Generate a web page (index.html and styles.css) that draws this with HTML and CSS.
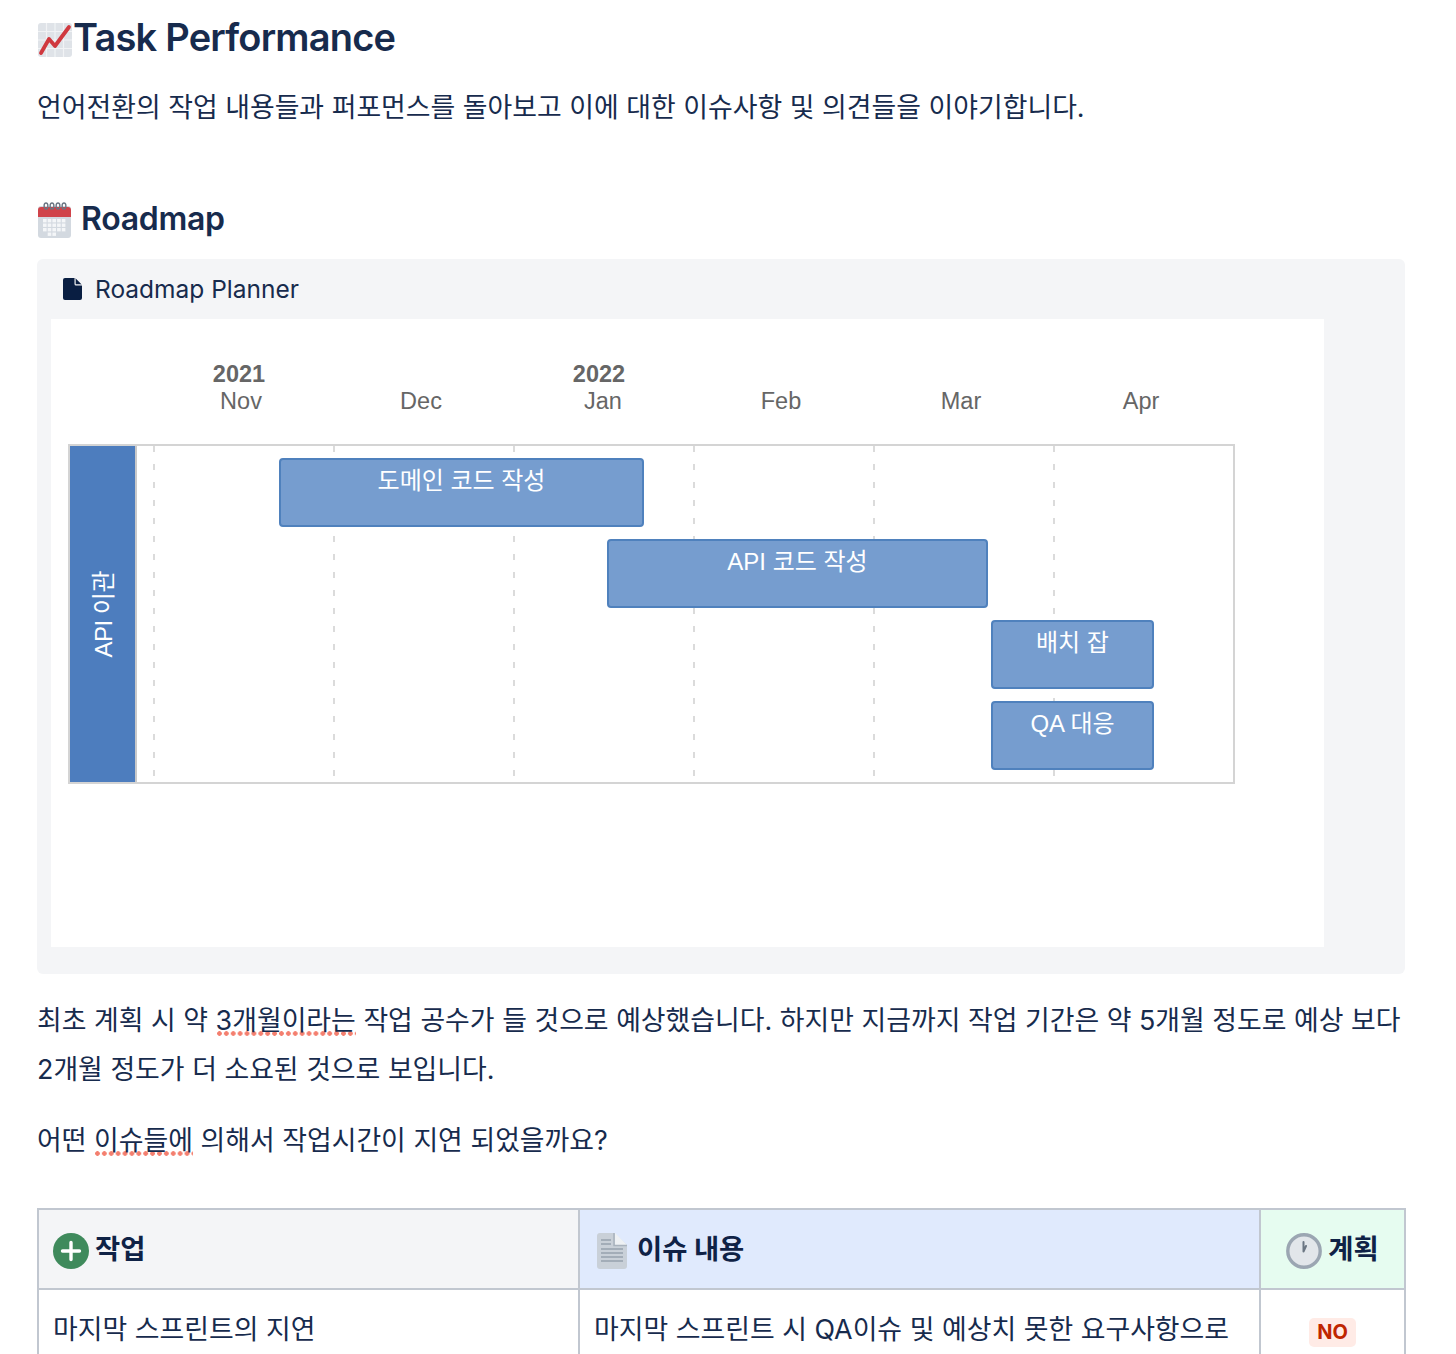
FILE: index.html
```html
<!DOCTYPE html>
<html lang="ko">
<head>
<meta charset="utf-8">
<title>Task Performance</title>
<link rel="stylesheet" href="styles.css">
</head>
<body>
<main class="page">
  <h1 class="title">
    <svg class="emoji-chart" viewBox="0 0 34 34"><rect width="34" height="34" rx="3" fill="#dfe3e8"/><path d="M0 8.500h34M0 17h34M0 25.500h34M8.500 0v34M17 0v34M25.500 0v34" stroke="#f1f3f5" stroke-width="1.200"/><path d="M3 30L11 16l6 7L31 4" fill="none" stroke="#d0393f" stroke-width="3.800" stroke-linecap="round" stroke-linejoin="round"/></svg>
    <span>Task Performance</span>
  </h1>
  <p class="lead">언어전환의 작업 내용들과 퍼포먼스를 돌아보고 이에 대한 이슈사항 및 의견들을 이야기합니다.</p>
  <h2 class="section">
    <svg class="emoji-cal" viewBox="0 0 34 36"><rect y="4" width="33" height="32" rx="3" fill="#d3d9e0"/><path d="M0 8a3 3 0 0 1 3-3h27a3 3 0 0 1 3 3v7H0z" fill="#d0434a"/><g fill="#f4f6f8"><rect x="5" y="17" width="3.600" height="3.400"/><rect x="9.700" y="17" width="3.600" height="3.400"/><rect x="14.400" y="17" width="3.600" height="3.400"/><rect x="19.100" y="17" width="3.600" height="3.400"/><rect x="23.800" y="17" width="3.600" height="3.400"/><rect x="5" y="21.500" width="3.600" height="3.400"/><rect x="9.700" y="21.500" width="3.600" height="3.400"/><rect x="14.400" y="21.500" width="3.600" height="3.400"/><rect x="19.100" y="21.500" width="3.600" height="3.400"/><rect x="23.800" y="21.500" width="3.600" height="3.400"/><rect x="5" y="26" width="3.600" height="3.400"/><rect x="9.700" y="26" width="3.600" height="3.400"/><rect x="14.400" y="26" width="3.600" height="3.400"/><rect x="19.100" y="26" width="3.600" height="3.400"/><rect x="23.800" y="26" width="3.600" height="3.400"/><rect x="9.700" y="30.500" width="3.600" height="3.400"/><rect x="14.400" y="30.500" width="3.600" height="3.400"/></g><g fill="none" stroke="#6b7683" stroke-width="1.400"><ellipse cx="8" cy="4" rx="1.900" ry="3"/><ellipse cx="14" cy="4" rx="1.900" ry="3"/><ellipse cx="20" cy="4" rx="1.900" ry="3"/><ellipse cx="26" cy="4" rx="1.900" ry="3"/></g></svg>
    <span>Roadmap</span>
  </h2>
  <section class="panel">
    <div class="panel-head">
      <svg class="file-icon" viewBox="0 0 19 22"><path d="M2 0h9.500L19 7.500V20a2 2 0 0 1-2 2H2a2 2 0 0 1-2-2V2a2 2 0 0 1 2-2z" fill="#091e42"/><path d="M11.500 0v6a1.500 1.500 0 0 0 1.500 1.500h6z" fill="#f4f5f7"/><path d="M12.700 0.600L18.400 6.300h-5.700z" fill="#091e42"/></svg>
      <span>Roadmap Planner</span>
    </div>
    <div class="canvas">
      <div class="months">
        <div class="month"><b class="year">2021</b>Nov</div>
        <div class="month">&nbsp;<br>Dec</div>
        <div class="month month-jan"><b class="year">2022</b>Jan</div>
        <div class="month">&nbsp;<br>Feb</div>
        <div class="month">&nbsp;<br>Mar</div>
        <div class="month">&nbsp;<br>Apr</div>
      </div>
      <div class="gantt">
        <svg class="grid" viewBox="0 0 1163 336"><path d="M84 0V332M264 0V332M444 0V332M624 0V332M804 0V332M984 0V332" stroke="#cfcfcf" stroke-width="1.500" stroke-dasharray="6 12"/></svg>
        <div class="lane"><span>API 이관</span></div>
        <div class="bar bar-domain">도메인 코드 작성</div>
        <div class="bar bar-api">API 코드 작성</div>
        <div class="bar bar-batch">배치 잡</div>
        <div class="bar bar-qa">QA 대응</div>
      </div>
    </div>
  </section>
  <p class="body-text">최초 계획 시 약 <span class="spell">3개월이라는</span> 작업 공수가 들 것으로 예상했습니다. 하지만 지금까지 작업 기간은 약 5개월 정도로 예상 보다 2개월 정도가 더 소요된 것으로 보입니다.</p>
  <p class="body-text question">어떤 <span class="spell">이슈들에</span> 의해서 작업시간이 지연 되었을까요?</p>
  <table class="issues">
    <colgroup><col class="col-a"><col class="col-b"><col class="col-c"></colgroup>
    <thead>
      <tr>
        <th class="th-grey"><span class="th-inner"><svg class="ic-plus" viewBox="0 0 36 36"><circle cx="18" cy="18" r="18" fill="#3f8a5c"/><path d="M18 9.500v17M9.500 18h17" stroke="#fff" stroke-width="3.400" stroke-linecap="round"/></svg>작업</span></th>
        <th class="th-blue"><span class="th-inner"><svg class="ic-doc" viewBox="0 0 30 36"><path d="M3 0h14l13 12v21a3 3 0 0 1-3 3H3a3 3 0 0 1-3-3V3a3 3 0 0 1 3-3z" fill="#c9d0d8"/><path d="M18 0l12 12H18z" fill="#eef1f4"/><path d="M17 0v12.500h13" fill="none" stroke="#a9b2bd" stroke-width="1.500"/><path d="M4 7h10M4 11h10M4 16h22M4 20h22M4 24h22M4 28h22" stroke="#97a1ad" stroke-width="1.600"/></svg>이슈 내용</span></th>
        <th class="th-green"><span class="th-inner th-center"><svg class="ic-clock" viewBox="0 0 36 36"><circle cx="18" cy="18" r="16.200" fill="#e2e6ea" stroke="#9ba6b2" stroke-width="3.400"/><path d="M17.500 18.500L17.500 9M17.500 18.500L20 13" stroke="#6b7683" stroke-width="2" stroke-linecap="round"/></svg>계획</span></th>
      </tr>
    </thead>
    <tbody>
      <tr>
        <td>마지막 스프린트의 지연</td>
        <td>마지막 스프린트 시 QA이슈 및 예상치 못한 요구사항으로 인해 작업이 지연되었습니다.</td>
        <td class="td-center"><span class="lozenge">NO</span></td>
      </tr>
    </tbody>
  </table>
</main>
</body>
</html>
```
FILE: styles.css
```css
html, body {
  margin: 0;
  height: 1354px;
  overflow: hidden;
  background: #fff;
}
body {
  font-family: Inter, "Noto Sans CJK KR", "Liberation Sans", sans-serif;
  color: #172b4d;
  font-size: 26.880px;
}
.page {
  padding: 0 51px 0 37px;
}
.title {
  display: flex;
  align-items: center;
  margin: 0;
  height: 74px;
  font-size: 38px;
  font-weight: 600;
  letter-spacing: -0.800px;
}
.emoji-chart {
  width: 34px;
  height: 34px;
  margin: 5px 1px 0 1px;
}
.lead {
  margin: 9px 0 0;
  line-height: 49px;
}
.section {
  display: flex;
  align-items: center;
  margin: 64px 0 0;
  height: 44px;
  font-size: 32px;
  font-weight: 600;
  letter-spacing: -0.300px;
}
.emoji-cal {
  width: 34px;
  height: 36px;
  margin: 3px 9px 0 1px;
}
.panel {
  margin-top: 19px;
  height: 715px;
  box-sizing: border-box;
  background: #f4f5f7;
  border-radius: 6px;
  padding: 0 81px 27px 14px;
  display: flex;
  flex-direction: column;
}
.panel-head {
  display: flex;
  align-items: center;
  height: 60px;
  padding-left: 12px;
  gap: 13px;
  color: #172b4d;
  font-size: 24.500px;
}
.file-icon {
  width: 19px;
  height: 22px;
}
.canvas {
  background: #fff;
  flex: 1;
  padding: 42px 0 0 17px;
  font-family: "Liberation Sans", "Noto Sans CJK KR", sans-serif;
}
.months {
  display: grid;
  grid-template-columns: repeat(6, 180px);
  padding-left: 83px;
  color: #666;
  font-size: 23.500px;
  line-height: 27px;
  text-align: center;
  height: 83px;
}
.year {
  display: block;
  font-size: 23.500px;
  margin-right: 4px;
}
.month-jan {
  padding-left: 4px;
}
.month-jan .year {
  margin-right: 8px;
}
.gantt {
  position: relative;
  width: 1163px;
  height: 336px;
  border: 2px solid #d4d4d4;
}
.grid {
  position: absolute;
  left: 0;
  top: 0;
  width: 1163px;
  height: 336px;
}
.lane {
  position: absolute;
  left: 0;
  top: 0;
  bottom: 0;
  box-sizing: border-box;
  width: 67px;
  padding-right: 2px;
  background: #4d7dbe;
  border-right: 2px solid #c9c9c9;
  display: flex;
  align-items: center;
  justify-content: center;
  color: #fff;
  font-size: 24px;
  letter-spacing: -0.500px;
}
.lane span {
  writing-mode: vertical-rl;
  text-orientation: sideways;
  transform: rotate(180deg);
}
.bar {
  position: absolute;
  box-sizing: border-box;
  height: 69px;
  padding-top: 5px;
  background: #769dcf;
  border: 2px solid #4f81bd;
  border-radius: 4px;
  color: #fff;
  font-size: 24px;
  line-height: 32px;
  text-align: center;
}
.bar-domain { left: 209px; top: 12px; width: 365px; }
.bar-api { left: 537px; top: 93px; width: 381px; }
.bar-batch { left: 921px; top: 174px; width: 163px; }
.bar-qa { left: 921px; top: 255px; width: 163px; }
.body-text {
  margin: 22px 0 0;
  line-height: 49px;
}
.question {
  margin-top: 22px;
}
.spell {
  background: radial-gradient(circle at center, #f47f6f 2px, transparent 2.600px) left bottom / 6.900px 5px repeat-x;
}
.issues {
  margin-top: 43px;
  width: 1367px;
  border-collapse: collapse;
  table-layout: fixed;
}
.col-a { width: 541px; }
.col-b { width: 681px; }
.col-c { width: 145px; }
.issues th, .issues td {
  border: 2px solid #c1c7d0;
  padding: 15px 14px;
  text-align: left;
  line-height: 49px;
  vertical-align: top;
}
.issues th {
  height: 80px;
  box-sizing: border-box;
  padding-top: 0;
  padding-bottom: 0;
  vertical-align: middle;
  font-size: 27.400px;
  font-weight: 700;
  color: #0f2246;
}
.th-grey { background: #f4f5f7; }
.th-blue { background: #e0eafd; }
.th-green { background: #e6fcf0; }
.th-inner {
  display: flex;
  align-items: center;
  gap: 6px;
  line-height: 36px;
}
.th-center {
  justify-content: center;
}
.ic-plus {
  width: 36px;
  height: 36px;
  margin-top: 4px;
}
.ic-doc {
  width: 30px;
  height: 36px;
  margin: 4px 4px 0 3px;
}
.ic-clock {
  width: 36px;
  height: 36px;
  margin-top: 4px;
}
.td-center {
  text-align: center !important;
}
.lozenge {
  display: inline-block;
  background: #ffebe6;
  color: #bf2600;
  font-size: 20px;
  font-weight: 700;
  line-height: 29px;
  padding: 0 8px;
  border-radius: 5px;
  margin-top: 13px;
}
```
